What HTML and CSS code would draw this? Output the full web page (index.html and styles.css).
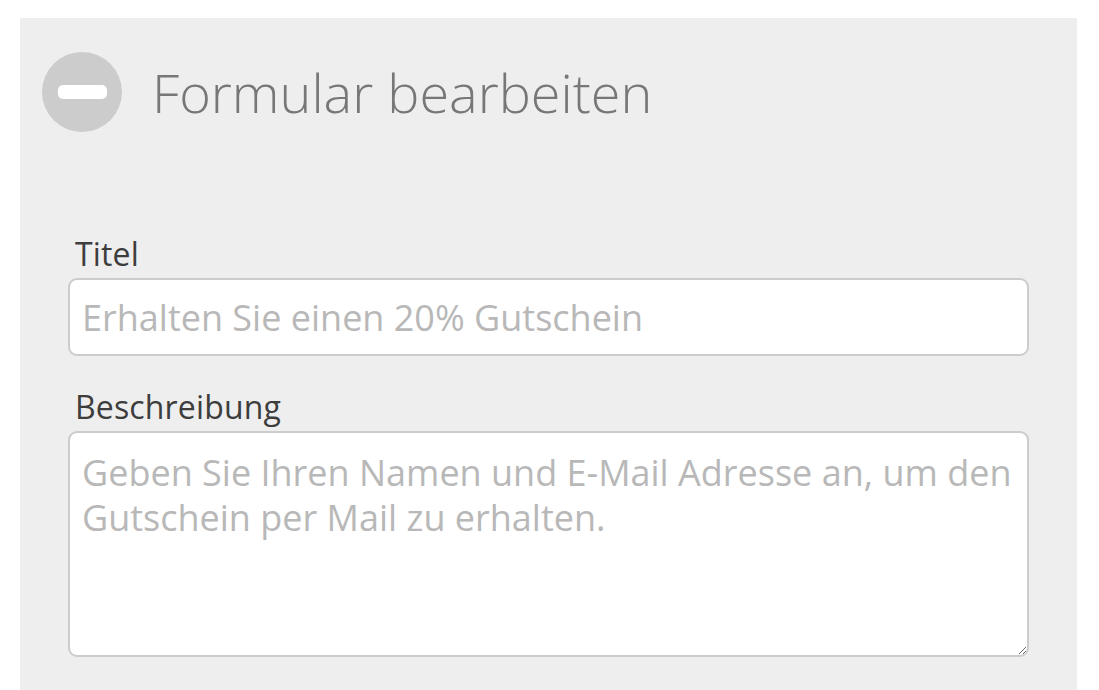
FILE: index.html
```html
<!DOCTYPE html>
<html lang="de">
<head>
<meta charset="utf-8">
<title>Formular bearbeiten</title>
<link rel="stylesheet" href="styles.css">
</head>
<body>
<div class="panel">
  <div class="header">
    <div class="collapse-icon"><span class="bar"></span></div>
    <h1 class="title">Formular bearbeiten</h1>
  </div>
  <form class="form">
    <label class="label" for="titel">Titel</label>
    <input class="input" id="titel" type="text" placeholder="Erhalten Sie einen 20% Gutschein">
    <label class="label label-second" for="beschreibung">Beschreibung</label>
    <textarea class="textarea" id="beschreibung" placeholder="Geben Sie Ihren Namen und E-Mail Adresse an, um den Gutschein per Mail zu erhalten."></textarea>
  </form>
</div>
</body>
</html>
```
FILE: styles.css
```css
html, body {
  margin: 0;
  padding: 0;
  background: #ffffff;
}
body {
  font-family: "Open Sans", "Liberation Sans", sans-serif;
}
.panel {
  margin: 18px 22px 0 20px;
  background: #eeeeee;
  padding: 34px 48px 40px 22px;
  min-height: 672px;
  box-sizing: border-box;
}
.header {
  display: flex;
  align-items: center;
  gap: 30px;
}
.collapse-icon {
  width: 80px;
  height: 80px;
  border-radius: 50%;
  background: #cccccc;
  display: flex;
  align-items: center;
  justify-content: center;
  flex: none;
}
.bar {
  width: 49px;
  height: 14px;
  border-radius: 5px;
  background: #ffffff;
}
.title {
  margin: 0;
  font-weight: 300;
  font-size: 54px;
  color: #777777;
  line-height: 1;
}
.form {
  display: flex;
  flex-direction: column;
  padding: 102px 0 0 26px;
}
.label {
  font-size: 32px;
  color: #3d3d3d;
  padding-left: 7px;
  line-height: 40px;
  margin-bottom: 4px;
  letter-spacing: 0.15px;
}
.label-second {
  margin-top: 31px;
}
.input, .textarea {
  font-family: "Open Sans", "Liberation Sans", sans-serif;
  font-size: 36px;
  color: #444;
  background: #ffffff;
  border: 2px solid #cccccc;
  border-radius: 9px;
  box-sizing: border-box;
  outline: none;
  margin: 0;
}
.input {
  height: 78px;
  padding: 0 12px;
}
.textarea {
  height: 226px;
  padding: 17px 12px 0;
  line-height: 45px;
  resize: vertical;
}
.input::placeholder, .textarea::placeholder {
  color: #b8b8b8;
  opacity: 1;
}
```
